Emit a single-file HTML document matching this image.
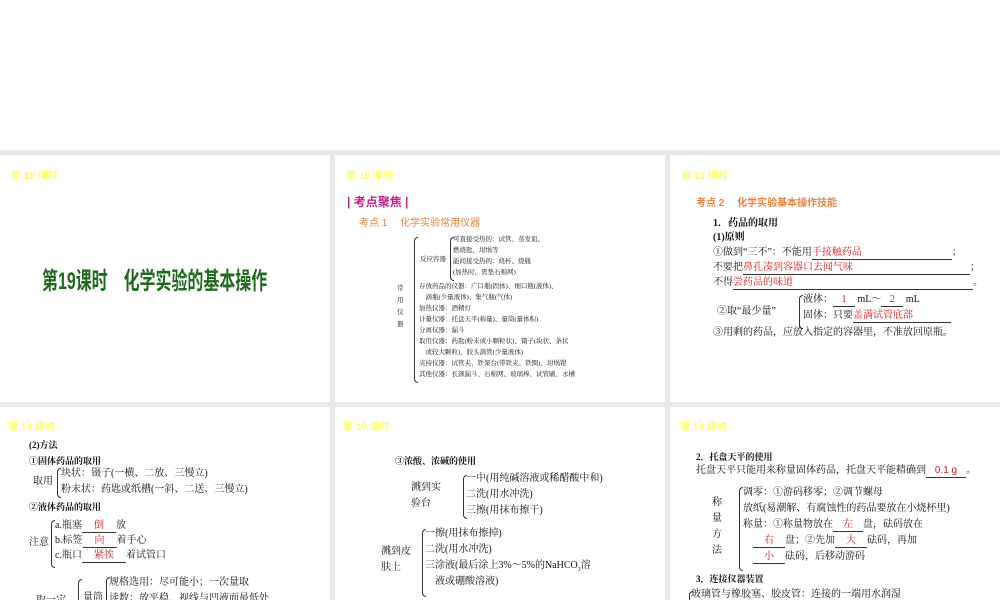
<!DOCTYPE html>
<html><head><meta charset="utf-8"><style>
body{margin:0;width:1000px;height:600px;overflow:hidden;background:#fff;font-family:"Liberation Serif","Noto Serif CJK SC",serif;position:relative}
.g{position:absolute;left:0;top:150px;width:1000px;height:450px;background:#e8e8e8}
.s{position:absolute;background:#fff;overflow:hidden}
.t{position:absolute;font-family:"Liberation Sans","Noto Sans CJK SC",sans-serif;color:#ffff66;font-size:10px;left:11px;top:12px;font-weight:bold}
.a{position:absolute;white-space:nowrap;color:#111}
.r{color:#d01818}
.u{display:inline-block;border-bottom:1px solid #333;text-align:center;line-height:12px;vertical-align:baseline}
.sm{font-size:6.5px;line-height:11px}
.n{font-size:10px;line-height:16px}
.br{position:absolute;border:1px solid #333;border-right:none;border-radius:4px 0 0 4px}
.o{font-family:"Liberation Sans","Noto Sans CJK SC",sans-serif;color:#e8823c;font-weight:bold;font-size:10px}
</style></head><body>
<div class="g"></div>

<div class="s" style="left:0;top:155px;width:330px;height:247px">
<div class="t">第 19 课时</div>
<div class="a" style="left:42px;top:106px;font-family:'Liberation Sans','Noto Sans CJK SC',sans-serif;font-size:24px;color:#1f6a1f;font-weight:bold;transform:scaleX(.665);transform-origin:left">第19课时　化学实验的基本操作</div>
</div>

<div class="s" style="left:335px;top:155px;width:330px;height:247px">
<div class="t">第 19 课时</div>
<div class="a" style="left:12px;top:38px;font-family:'Liberation Sans','Noto Sans CJK SC',sans-serif;font-weight:bold;font-size:12px;color:#c0208a">| 考点聚焦 |</div>
<div class="a o" style="left:24px;top:59px;font-weight:normal">考点 1　 化学实验常用仪器</div>
<div class="a sm" style="left:62px;top:128px;width:8px;white-space:normal;line-height:12px">常用仪器</div>
<div class="br" style="left:79px;top:82px;width:3px;height:144px"></div>
<div class="br" style="left:115px;top:82px;width:3px;height:42px"></div>
<div class="a sm" style="left:85px;top:99px">反应容器</div>
<div class="a sm" style="left:118px;top:79px">可直接受热的：试管、蒸发皿、<br>燃烧匙、坩埚等<br>能间接受热的：烧杯、烧瓶<br>(加热时，需垫石棉网)</div>
<div class="a sm" style="left:84px;top:126px">存放药品的仪器：广口瓶(固体)、细口瓶(液体)、<br>　滴瓶(少量液体)、集气瓶(气体)<br>加热仪器：酒精灯<br>计量仪器：托盘天平(称量)、量筒(量体积)<br>分离仪器：漏斗<br>取用仪器：药匙(粉末或小颗粒状)、镊子(块状、条状<br>　或较大颗粒)、胶头滴管(少量液体)<br>夹持仪器：试管夹、铁架台(带铁夹、铁圈)、坩埚钳<br>其他仪器：长颈漏斗、石棉网、玻璃棒、试管刷、水槽</div>
</div>

<div class="s" style="left:670px;top:155px;width:330px;height:247px">
<div class="t">第 19 课时</div>
<div class="a o" style="left:26px;top:39px">考点 2　 化学实验基本操作技能</div>
<div class="a" style="left:43px;top:62px;font-weight:bold;font-size:10px;line-height:14px">1．药品的取用<br>(1)原则</div>
<div class="a" style="left:43px;top:90px;font-size:10px;line-height:15px">①做到“三不”：不能用<span class="u r" style="width:140px;text-align:left">手接触药品</span>；<br>不要把<span class="u r" style="width:227px;text-align:left">鼻孔凑到容器口去闻气味</span>；<br>不得<span class="u r" style="width:240px;text-align:left">尝药品的味道</span>。</div>
<div class="a n" style="left:47px;top:149px">②取“最少量”</div>
<div class="br" style="left:129px;top:140px;width:3px;height:32px"></div>
<div class="a" style="left:133px;top:137px;font-size:10px;line-height:16px">液体：<span class="u r" style="width:22px">1</span> mL～<span class="u r" style="width:22px">2</span> mL<br>固体：只要<span class="u r" style="width:98px;text-align:left">盖满试管底部</span></div>
<div class="a n" style="left:43px;top:170px">③用剩的药品，应放入指定的容器里，不准放回原瓶。</div>
</div>

<div class="s" style="left:0;top:407px;width:330px;height:193px">
<div class="t" style="left:8px;top:11px">第 19 课时</div>
<div class="a n" style="left:29px;top:30px;font-weight:bold;font-size:9px">(2)方法<br>①固体药品的取用</div>
<div class="a n" style="left:33px;top:67px">取用</div>
<div class="br" style="left:57px;top:61px;width:3px;height:28px"></div>
<div class="a n" style="left:61px;top:59px">块状：镊子(一横、二放、三慢立)<br>粉末状：药匙或纸槽(一斜、二送、三慢立)</div>
<div class="a n" style="left:29px;top:92px;font-size:9px;font-weight:bold">②液体药品的取用</div>
<div class="a n" style="left:29px;top:128px">注意</div>
<div class="br" style="left:51px;top:113px;width:3px;height:46px"></div>
<div class="a" style="left:55px;top:111px;font-size:10px;line-height:15px">a.瓶塞<span class="u r" style="width:34px">倒</span>放<br>b.标签<span class="u r" style="width:34px">向</span>着手心<br>c.瓶口<span class="u r" style="width:44px">紧挨</span>着试管口</div>
<div class="br" style="left:78px;top:172px;width:3px;height:30px"></div>
<div class="a n" style="left:36px;top:186px">取一定</div>
<div class="a n" style="left:83px;top:183px">量筒</div>
<div class="br" style="left:106px;top:170px;width:3px;height:30px"></div>
<div class="a n" style="left:109px;top:168px">规格选用：尽可能小；一次量取<br>读数：放平稳，视线与凹液面最低处</div>
</div>

<div class="s" style="left:335px;top:407px;width:330px;height:193px">
<div class="t" style="left:8px;top:11px">第 19 课时</div>
<div class="a n" style="left:60px;top:46px;font-size:9px;font-weight:bold">③浓酸、浓碱的使用</div>
<div class="a n" style="left:76px;top:73px">溅到实<br>验台</div>
<div class="br" style="left:128px;top:68px;width:3px;height:42px"></div>
<div class="a n" style="left:131px;top:64px">一中(用纯碱溶液或稀醋酸中和)<br>二洗(用水冲洗)<br>三擦(用抹布擦干)</div>
<div class="a n" style="left:46px;top:137px">溅到皮<br>肤上</div>
<div class="br" style="left:87px;top:122px;width:3px;height:66px"></div>
<div class="a n" style="left:90px;top:119px">一擦(用抹布擦掉)<br>二洗(用水冲洗)<br>三涂液(最后涂上3%～5%的NaHCO<sub style="font-size:6px;line-height:0">3</sub>溶<br>　液或硼酸溶液)</div>
</div>

<div class="s" style="left:670px;top:407px;width:330px;height:193px">
<div class="t" style="left:10px;top:11px">第 19 课时</div>
<div class="a n" style="left:26px;top:42px;font-size:9px;font-weight:bold">2．托盘天平的使用</div>
<div class="a" style="left:26px;top:56px;font-size:10px;line-height:16px">托盘天平只能用来称量固体药品，托盘天平能精确到<span class="u r" style="width:40px;font-family:'Liberation Sans',sans-serif">0.1 g</span>。</div>
<div class="a n" style="left:42px;top:88px;width:10px;white-space:normal;line-height:16px">称量方法</div>
<div class="br" style="left:69px;top:80px;width:3px;height:82px"></div>
<div class="a" style="left:73px;top:78px;font-size:10px;line-height:16px">调零：①游码移零；②调节螺母<br>放纸(易潮解、有腐蚀性的药品要放在小烧杯里)<br>称量：①称量物放在<span class="u r" style="width:30px">左</span>盘，砝码放在<br>　<span class="u r" style="width:32px">右</span>盘；②先加<span class="u r" style="width:32px">大</span>砝码，再加<br>　<span class="u r" style="width:32px">小</span>砝码，后移动游码</div>
<div class="a n" style="left:26px;top:164px;font-size:9px;font-weight:bold">3．连接仪器装置</div>
<div class="br" style="left:19px;top:184px;width:3px;height:20px"></div>
<div class="a n" style="left:21px;top:180px">玻璃管与橡胶塞、胶皮管：连接的一端用水润湿</div>
</div>
</body></html>
